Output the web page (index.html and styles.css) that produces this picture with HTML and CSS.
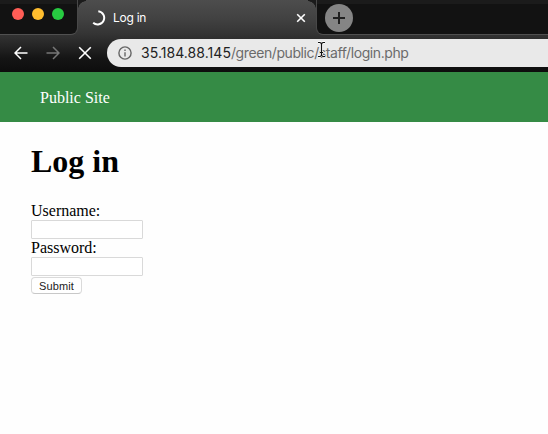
FILE: index.html
```html
<!DOCTYPE html>
<html lang="en">
<head>
<meta charset="utf-8">
<title>Log in</title>
<link rel="stylesheet" href="styles.css">
</head>
<body>
<div class="browser">
  <div class="tabstrip">
    <div class="window-controls">
      <span class="light close"></span><span class="light minimize"></span><span class="light expand"></span>
    </div>
    <div class="tab">
      <svg class="spinner" width="16" height="18" viewBox="0 0 16 18" fill="none" stroke="#fff" stroke-width="2" stroke-linecap="butt"><path d="M8.3 2.3A6.6 6.6 0 1 1 3.2 13.8"/></svg>
      <span class="tab-title">Log in</span>
      <svg class="tab-close" width="10" height="10" viewBox="0 0 10 10" stroke="#fff" stroke-width="1.6"><path d="M1.2 1.2l7.6 7.6M8.8 1.2L1.2 8.8"/></svg>
    </div>
    <div class="strip-rest">
      <div class="new-tab"><svg width="28" height="28" viewBox="0 0 28 28" stroke="#202020" stroke-width="2"><path d="M14 8v12M8 14h12"/></svg></div>
    </div>
  </div>
  <div class="toolbar">
    <svg class="nav" width="14" height="14" viewBox="0 0 14 14" fill="none" stroke="#fff" stroke-width="1.5"><path d="M13.5 7H1.2M7 1L1 7l6 6"/></svg>
    <svg class="nav" width="14" height="14" viewBox="0 0 14 14" fill="none" stroke="#777" stroke-width="1.5"><path d="M.5 7h12.3M7 1l6 6-6 6"/></svg>
    <svg class="nav" width="14" height="14" viewBox="0 0 14 14" fill="none" stroke="#fff" stroke-width="1.6"><path d="M1.2 1.2l11.6 11.6M12.8 1.2L1.2 12.8"/></svg>
    <div class="address">
      <svg width="14" height="14" viewBox="0 0 14 14" fill="none" stroke="#666" stroke-width="1.4"><circle cx="7" cy="7" r="6.1"/><path d="M7 6.2v4.2M7 3.5v1.5"/></svg>
      <span class="url"><span class="host">35.184.88.145</span><span class="path">/green/public/staff/login.php</span></span>
    </div>
  </div>
</div>
<header class="site-header"><span>Public Site</span></header>
<main class="content">
  <h1>Log in</h1>
  <form>
    <label for="username">Username:</label>
    <input id="username" type="text">
    <label for="password">Password:</label>
    <input id="password" type="password">
    <button type="button">Submit</button>
  </form>
</main>
<svg class="cursor" width="9" height="17" viewBox="0 0 9 17" fill="none"><path d="M1 1.5h2l1.5 1L6 1.5h2M4.5 2.5v12M1 15.5h2l1.5-1 1.5 1h2M3 11.5h3" stroke="#fff" stroke-width="2.4"/><path d="M1 1.5h2l1.5 1L6 1.5h2M4.5 2.5v12M1 15.5h2l1.5-1 1.5 1h2M3 11.5h3" stroke="#111" stroke-width="1.2"/></svg>
</body>
</html>
```
FILE: styles.css
```css
* { box-sizing: border-box; }
body { margin: 0; height: 434px; overflow: hidden; background: #fefefe; color: #000; font: 16px/18px "Liberation Serif", serif; }
.browser { height: 72px; background: linear-gradient(#4d4d4d 0, #424242 18px, #343434 34px, #252525 46px, #151515 58px, #0d0d0d 72px); font-family: Inter, "Liberation Sans", sans-serif; }
.tabstrip { display: flex; height: 35px; }
.window-controls { display: flex; gap: 8px; width: 78px; padding: 8px 0 0 12px; background: linear-gradient(#1b1b1b 0 4px, #121212 4px); border-bottom: 1px solid #505050; border-right: 1px solid #484848; border-bottom-right-radius: 7px; }
.light { width: 12px; height: 12px; border-radius: 50%; }
.close { background: #ff5d56; }
.minimize { background: #ffbd2e; }
.expand { background: #27cb41; }
.tab { position: relative; display: flex; align-items: center; width: 238px; padding: 1px 10px 0 12px; }
.tab::before, .tab::after { content: ""; position: absolute; top: 0; width: 8px; height: 8px; }
.tab::before { left: 0; background: radial-gradient(circle at 8px 9px, transparent 7.5px, #1b1b1b 8px); }
.tab::after { right: 0; background: radial-gradient(circle at 0 9px, transparent 7.5px, #1b1b1b 8px); }
.tab-title { margin-left: 7px; color: #fff; font-size: 12px; letter-spacing: -.25px; }
.tab-close { margin-left: auto; }
.strip-rest { flex: 1; padding: 4px 0 0 8px; background: linear-gradient(#1b1b1b 0 4px, #121212 4px); border-bottom: 1px solid #505050; border-left: 1px solid #484848; border-bottom-left-radius: 7px; }
.new-tab { width: 28px; height: 28px; border-radius: 50%; background: #858585; }
.new-tab svg { display: block; }
.toolbar { display: flex; height: 36px; align-items: center; padding-left: 14px; }
.nav { flex: none; margin-right: 18px; }
.address { display: flex; align-items: center; flex: 1; height: 28px; margin-left: -3px; padding-left: 11px; border-radius: 14px 0 0 14px; background: #e9e9e9; white-space: nowrap; }
.url { margin-left: 9px; font-size: 14px; }
.host { color: #222; letter-spacing: .05px; }
.path { color: #6b6b6b; letter-spacing: -.41px; }
.site-header { display: flex; align-items: center; height: 50px; padding: 2px 0 0 40px; background: #358b45; color: #fff; }
.content { padding: 21px 31px; }
h1 { margin: 0; font-size: 32px; line-height: 36px; }
form { display: flex; flex-direction: column; align-items: flex-start; margin-top: 23px; }
label { height: 18px; }
input { width: 112px; height: 19px; margin: 0; padding: 1px 3px; border: 1px solid #d9d9d9; border-radius: 1px; background: #fff; outline: none; }
button { width: 51px; height: 17px; margin: 1px 0 0; padding: 0; border: 1px solid #dadada; border-bottom-color: #c8c8c8; border-radius: 4px; background: #fff; color: #222; font: 11px/14px "Liberation Sans", sans-serif; letter-spacing: .1px; }
.cursor { position: absolute; left: 317px; top: 41px; }
```
